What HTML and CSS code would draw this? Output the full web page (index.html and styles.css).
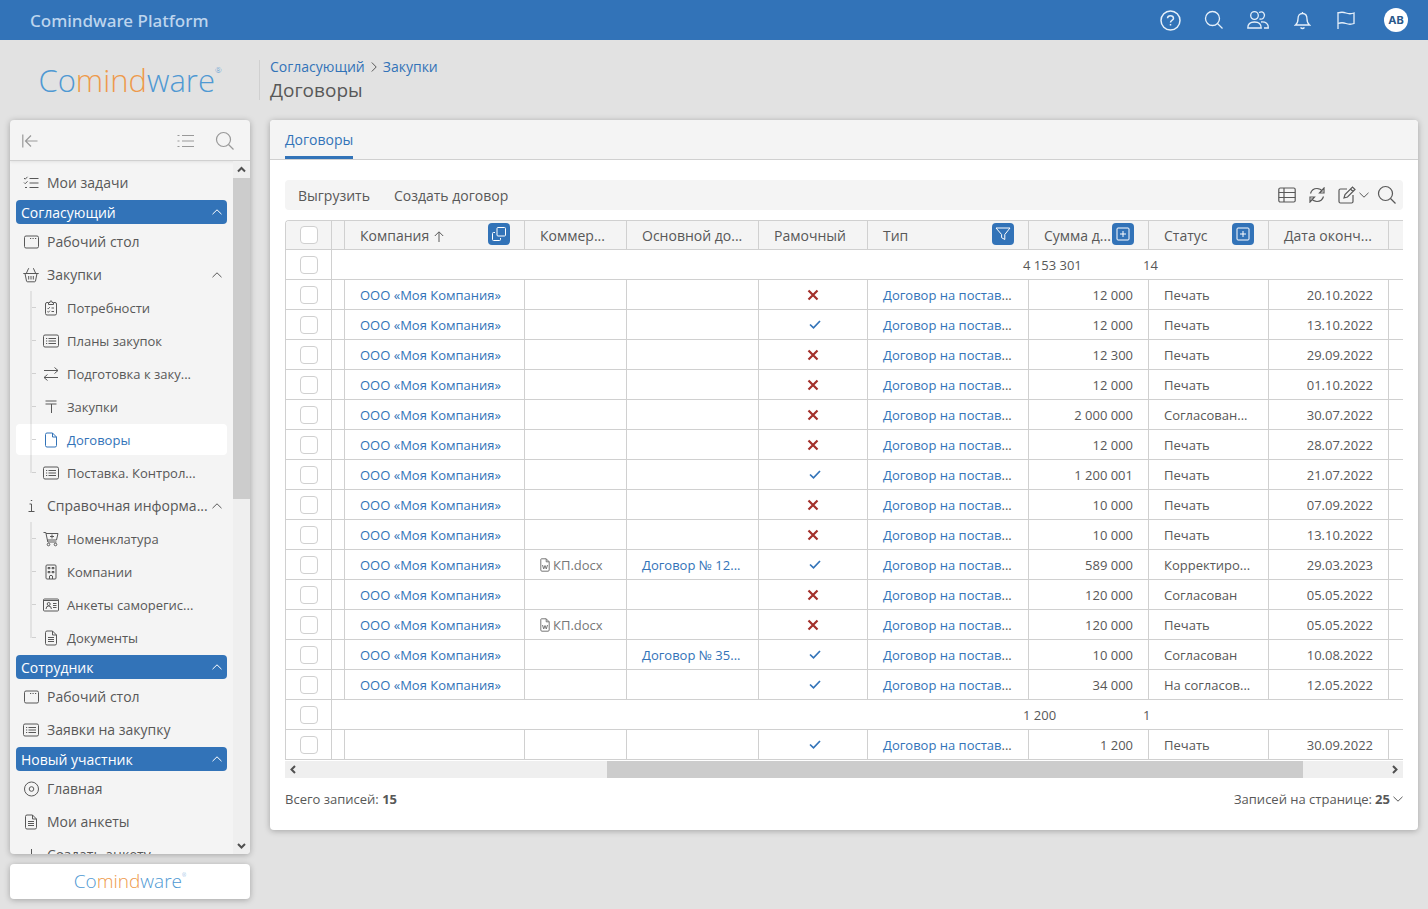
FILE: index.html
```html
<!DOCTYPE html>
<html lang="ru">
<head>
<meta charset="utf-8">
<meta name="viewport" content="width=device-width, initial-scale=1">
<title>Договоры</title>
<link rel="stylesheet" href="styles.css">
</head>
<body>
<svg class="sprite" aria-hidden="true">
  <symbol id="chev-up" viewBox="0 0 10 6"><path d="M.5 5.200 5 .8l4.500 4.400"/></symbol>
  <symbol id="chev-down" viewBox="0 0 10 6"><path d="M.5.8 5 5.200 9.500.8"/></symbol>
  <symbol id="search" viewBox="0 0 20 20"><circle cx="8.500" cy="8.500" r="7"/><path d="m13.500 13.500 5 5"/></symbol>
  <symbol id="desk" viewBox="0 0 16 16"><rect x="1.500" y="2" width="14" height="12" rx="1.500"/><path d="M7 4.500h1.200M9.500 4.500h1.200M12 4.500h1.200"/></symbol>
  <symbol id="list" viewBox="0 0 16 16"><rect x=".5" y="2" width="15" height="12" rx="1.500"/><path d="M3 5.500h1.200M5.500 5.500H13M3 8h1.200M5.500 8H13M3 10.500h1.200M5.500 10.500H13"/></symbol>
  <symbol id="doc" viewBox="0 0 16 16"><path d="M4 1h5.500l4 4v8.500q0 1.500-1.500 1.500H4q-1.500 0-1.500-1.500V2.500Q2.500 1 4 1M9.500 1v4h4"/></symbol>
  <symbol id="doc-text" viewBox="0 0 16 16"><path d="M4 1h5.500l4 4v8.500q0 1.500-1.500 1.500H4q-1.500 0-1.500-1.500V2.500Q2.500 1 4 1M9.500 1v4h4M5 7.500h6M5 9.500h6M5 11.500h6"/></symbol>
  <symbol id="docx" viewBox="0 0 10 14"><path d="M1.500.8h4.700l3 3v8.200q0 1.200-1.200 1.200H2Q.8 13.200.8 12V1.500q0-.7.7-.7M6.200.8v3h3M2.500 7l1.200 4L5 7.500 6.300 11l1.200-4"/></symbol>
  <symbol id="yes" viewBox="0 0 12 9"><path d="m1 4.500 3.500 3.300L11 1"/></symbol>
  <symbol id="no" viewBox="0 0 12 12"><path d="m1.500 1.500 9 9m0-9-9 9"/></symbol>
  <symbol id="plus-box" viewBox="0 0 14 14"><rect x="1" y="1" width="12" height="12" rx="1"/><path d="M7 4v6M4 7h6"/></symbol>
</svg>

<header class="topbar">
  <span class="brand">Comindware Platform</span>
  <nav class="top-actions">
    <button type="button" aria-label="Справка"><svg width="21" height="21" viewBox="0 0 21 21"><circle cx="10.500" cy="10.500" r="9.500" stroke-width="1.500"/><path d="M7.500 8.300Q7.700 5.800 10.500 5.800t3 2.500q0 1.300-1.500 2-1.500.8-1.500 2.200M10.500 14v1.500" stroke-width="1.500"/></svg></button>
    <button type="button" aria-label="Поиск"><svg width="20" height="20"><use href="#search"/></svg></button>
    <button type="button" aria-label="Пользователи"><svg width="22" height="18" viewBox="0 0 22 18"><circle cx="7.500" cy="4.500" r="3.800"/><path d="M.8 17q0-6 6.700-6t6.700 6zM12 1.500q4.500-2 5.500 2.500-.5 5-5 4M14 11q7.500-.5 7.300 6H17"/></svg></button>
    <button type="button" aria-label="Уведомления"><svg width="17" height="19" viewBox="0 0 17 19"><path d="M8.500 1v1.500M1.500 14Q4 12 4 8q0-5.500 4.500-5.500T13 8q0 4 2.500 6zM6.500 16.500q2 2 4 0"/></svg></button>
    <button type="button" aria-label="Задачи"><svg width="18" height="19" viewBox="0 0 18 19"><path d="M1 1v17M1 2q4-1.500 8 0t8 0v10.500q-4 1.500-8 0t-8 0"/></svg></button>
  </nav>
  <button type="button" class="avatar">AB</button>
</header>

<div class="page">
  <div class="logo logo-large"><span>Co</span><span class="logo-accent">mind</span><span>ware</span><sup>®</sup></div>

  <div class="heading">
    <nav class="crumbs"><a href="#">Согласующий</a><svg width="6" height="10" viewBox="0 0 6 10"><path d="m.8.5 4.400 4.500L.8 9.500"/></svg><a href="#">Закупки</a></nav>
    <h1>Договоры</h1>
  </div>

  <aside class="side">
    <div class="side-card">
      <div class="side-tools">
        <button type="button" aria-label="Свернуть"><svg width="16" height="14" viewBox="0 0 16 14"><path d="M.8.5v13M15.500 7h-12M9 1.500 3.500 7 9 12.500"/></svg></button>
        <button type="button" class="push" aria-label="Список"><svg width="17" height="14" viewBox="0 0 17 14"><path d="M.5 1.500h2M5 1.500h12M.5 7h2M5 7h12M.5 12.500h2M5 12.500h12"/></svg></button>
        <button type="button" aria-label="Поиск"><svg width="20" height="20"><use href="#search"/></svg></button>
      </div>
      <div class="side-scroll">
        <nav class="menu">
          <a class="item" href="#"><svg class="ico" viewBox="0 0 16 16"><path d="m1 3 1.200 1.200L4.500 1.800M1 7.500l1.200 1.200 2.300-2.400M6.500 3.500h9M6.500 8h9M6.500 12.500h9M2 12.500h2"/></svg><span>Мои задачи</span></a>
          <button type="button" class="section"><span>Согласующий</span><svg class="chev"><use href="#chev-up"/></svg></button>
          <a class="item" href="#"><svg class="ico"><use href="#desk"/></svg><span>Рабочий стол</span></a>
          <button type="button" class="item"><svg class="ico" viewBox="0 0 16 16"><path d="M.3 6.500h15.400M2 6.500l1.500 7.500q.2.800 1 .8h7q.8 0 1-.8L14 6.500M3.500 6l2-4.500M12.500 6l-2-4.500M5.500 1.500h.6M10 1.500h.6M5.700 9v3.500M8 9v3.500M10.300 9v3.500"/></svg><span>Закупки</span><svg class="chev"><use href="#chev-up"/></svg></button>
          <ul class="tree">
            <li><a class="item" href="#"><svg class="ico" viewBox="0 0 16 16"><path d="M5 2.500H4Q2.500 2.500 2.500 4v9.500Q2.500 15 4 15h8q1.500 0 1.500-1.500V4q0-1.500-1.500-1.500h-1M5.500 4.500h5v-2H9q0-1.800-1-1.800t-1 1.800H5.500zM4.500 8l.8.800 1.500-1.600M8.500 8H11M4.500 11.500l.8.800 1.500-1.600M8.500 11.500H11"/></svg><span>Потребности</span></a></li>
            <li><a class="item" href="#"><svg class="ico"><use href="#list"/></svg><span>Планы закупок</span></a></li>
            <li><a class="item" href="#"><svg class="ico" viewBox="0 0 16 16"><path d="M1 4.500h14M11.500 1.500l3.500 3-3.500 3M15 11.500H1M4.500 8.500l-3.500 3 3.500 3"/></svg><span>Подготовка к заку...</span></a></li>
            <li><a class="item" href="#"><svg class="ico" viewBox="0 0 16 16"><path d="M2.500 2h11M2.500 5h11M8.500 5v9"/></svg><span>Закупки</span></a></li>
            <li><a class="item active" href="#"><svg class="ico"><use href="#doc"/></svg><span>Договоры</span></a></li>
            <li><a class="item" href="#"><svg class="ico"><use href="#list"/></svg><span>Поставка. Контрол...</span></a></li>
          </ul>
          <button type="button" class="item"><svg class="ico" viewBox="0 0 16 16"><path d="M7.800 2.500h1.400M6.500 6h2v7.500M5.500 13.500h6"/></svg><span>Справочная информа...</span><svg class="chev"><use href="#chev-up"/></svg></button>
          <ul class="tree">
            <li><a class="item" href="#"><svg class="ico" viewBox="0 0 16 16"><path d="M.5 1.500h2.300l2 9.500h8.700M3 2.500h12L13.500 9H4.500M9 3.500v4M7 5.500h4"/><circle cx="5.500" cy="13.500" r="1.300"/><circle cx="12.500" cy="13.500" r="1.300"/></svg><span>Номенклатура</span></a></li>
            <li><a class="item" href="#"><svg class="ico" viewBox="0 0 16 16"><rect x="3" y="1" width="10" height="14" rx="1"/><path d="M5 3.500h2v1.200H5zM9 3.500h2v1.200H9zM5 7.500h2v1.200H5zM9 7.500h2v1.200H9zM6.500 15v-3q1.500-1.500 3 0v3"/></svg><span>Компании</span></a></li>
            <li><a class="item" href="#"><svg class="ico" viewBox="0 0 16 16"><rect x=".5" y="2" width="15" height="12" rx="1"/><path d="M.5 3.500h15M3 12q0-3 2.700-3t2.700 3M10 6.500h3.500M10 8.500h3.500M10 10.500h3.500"/><circle cx="5.700" cy="7" r="1.500"/></svg><span>Анкеты саморегис...</span></a></li>
            <li><a class="item" href="#"><svg class="ico"><use href="#doc-text"/></svg><span>Документы</span></a></li>
          </ul>
          <button type="button" class="section"><span>Сотрудник</span><svg class="chev"><use href="#chev-up"/></svg></button>
          <a class="item" href="#"><svg class="ico"><use href="#desk"/></svg><span>Рабочий стол</span></a>
          <a class="item" href="#"><svg class="ico"><use href="#list"/></svg><span>Заявки на закупку</span></a>
          <button type="button" class="section"><span>Новый участник</span><svg class="chev"><use href="#chev-up"/></svg></button>
          <a class="item" href="#"><svg class="ico" viewBox="0 0 16 16"><circle cx="8.500" cy="8" r="7"/><circle cx="8.500" cy="8" r="2.300"/></svg><span>Главная</span></a>
          <a class="item" href="#"><svg class="ico"><use href="#doc-text"/></svg><span>Мои анкеты</span></a>
          <a class="item" href="#"><svg class="ico" viewBox="0 0 16 16"><path d="M8.500 2v12M2.500 8h12"/></svg><span>Создать анкету</span></a>
        </nav>
        <div class="vbar">
          <svg width="17" height="17" viewBox="0 0 17 17"><path d="m5 10.500 3.500-3.500 3.500 3.500"/></svg>
          <div class="vthumb"></div>
          <svg width="17" height="17" viewBox="0 0 17 17"><path d="m5 7 3.500 3.500L12 7"/></svg>
        </div>
      </div>
    </div>
    <div class="side-foot"><div class="logo logo-small"><span>Co</span><span class="logo-accent">mind</span><span>ware</span><sup>®</sup></div></div>
  </aside>

  <main class="panel">
    <div class="tabs"><a class="tab" href="#">Договоры</a></div>
    <div class="content">
      <div class="toolbar">
        <button type="button" class="command">Выгрузить</button>
        <button type="button" class="command">Создать договор</button>
        <div class="tools">
          <button type="button" aria-label="Вид"><svg width="18" height="16" viewBox="0 0 18 16"><rect x=".8" y="1" width="16.400" height="14" rx="1.500"/><path d="M.8 5.500h16.400M.8 10.500h16.400M6 1v14"/></svg></button>
          <button type="button" aria-label="Обновить"><svg width="16" height="16" viewBox="0 0 16 16"><path d="M1.500 6.500Q3 1.500 8 1.500q3.500 0 5.500 3M15 1v5h-4.500zM14.500 9.500q-1.500 5-6.500 5-3.500 0-5.500-3M1 15v-5h4.500z"/></svg></button>
          <button type="button" class="edit" aria-label="Изменить"><svg width="18" height="18" viewBox="0 0 18 18"><path d="M9 3H2.500Q1 3 1 4.500v11Q1 17 2.500 17h11q1.500 0 1.500-1.500V9M6 12l1-3.500L14.500 1 17 3.500 9.500 11zM12.500 3 15 5.500"/></svg><svg class="chev"><use href="#chev-down"/></svg></button>
          <button type="button" aria-label="Поиск"><svg width="20" height="20"><use href="#search"/></svg></button>
        </div>
      </div>

      <div class="grid-wrap">
      <table class="grid">
        <colgroup><col class="w-check"><col class="w-gap"><col class="w-company"><col class="w-offer"><col class="w-parent"><col class="w-frame"><col class="w-type"><col class="w-std"><col class="w-std"><col class="w-std"><col></colgroup>
        <thead>
          <tr>
            <th><input type="checkbox" aria-label="Выбрать все"></th><th></th>
            <th><div class="th"><span>Компания</span><svg class="sort" width="10" height="11" viewBox="0 0 10 11"><path d="M5 11V1M.8 5 5 .8 9.200 5"/></svg><button type="button" aria-label="Группировка"><svg width="14" height="14" viewBox="0 0 14 14"><rect x="5" y=".5" width="8.500" height="8.500" rx="1"/><path d="M3 5.500H1.500q-1 0-1 1v6q0 1 1 1h6q1 0 1-1V11"/></svg></button></div></th>
            <th>Коммер...</th><th>Основной до...</th><th>Рамочный</th>
            <th><div class="th"><span>Тип</span><button type="button" aria-label="Фильтр"><svg width="16" height="14" viewBox="0 0 16 14"><path d="M1 1h14L9.800 7.500v5l-3.200-1.800V7.500z"/></svg></button></div></th>
            <th><div class="th"><span>Сумма д...</span><button type="button" aria-label="Итог"><svg width="14" height="14"><use href="#plus-box"/></svg></button></div></th>
            <th><div class="th"><span>Статус</span><button type="button" aria-label="Итог"><svg width="14" height="14"><use href="#plus-box"/></svg></button></div></th>
            <th>Дата оконч...</th><th></th>
          </tr>
        </thead>
        <tbody>
          <tr class="group"><td><input type="checkbox" aria-label="Выбрать группу"></td><td colspan="10"><div class="totals"><span>4 153 301</span><span>14</span></div></td></tr>
          <tr><td><input type="checkbox" aria-label="Выбрать"></td><td></td><td><a href="#">ООО «Моя Компания»</a></td><td></td><td></td><td class="flag"><svg class="no"><use href="#no"/></svg></td><td><a href="#">Договор на постав</a>...</td><td class="num">12 000</td><td>Печать</td><td class="num">20.10.2022</td><td></td></tr>
          <tr><td><input type="checkbox" aria-label="Выбрать"></td><td></td><td><a href="#">ООО «Моя Компания»</a></td><td></td><td></td><td class="flag"><svg class="yes"><use href="#yes"/></svg></td><td><a href="#">Договор на постав</a>...</td><td class="num">12 000</td><td>Печать</td><td class="num">13.10.2022</td><td></td></tr>
          <tr><td><input type="checkbox" aria-label="Выбрать"></td><td></td><td><a href="#">ООО «Моя Компания»</a></td><td></td><td></td><td class="flag"><svg class="no"><use href="#no"/></svg></td><td><a href="#">Договор на постав</a>...</td><td class="num">12 300</td><td>Печать</td><td class="num">29.09.2022</td><td></td></tr>
          <tr><td><input type="checkbox" aria-label="Выбрать"></td><td></td><td><a href="#">ООО «Моя Компания»</a></td><td></td><td></td><td class="flag"><svg class="no"><use href="#no"/></svg></td><td><a href="#">Договор на постав</a>...</td><td class="num">12 000</td><td>Печать</td><td class="num">01.10.2022</td><td></td></tr>
          <tr><td><input type="checkbox" aria-label="Выбрать"></td><td></td><td><a href="#">ООО «Моя Компания»</a></td><td></td><td></td><td class="flag"><svg class="no"><use href="#no"/></svg></td><td><a href="#">Договор на постав</a>...</td><td class="num">2 000 000</td><td>Согласован...</td><td class="num">30.07.2022</td><td></td></tr>
          <tr><td><input type="checkbox" aria-label="Выбрать"></td><td></td><td><a href="#">ООО «Моя Компания»</a></td><td></td><td></td><td class="flag"><svg class="no"><use href="#no"/></svg></td><td><a href="#">Договор на постав</a>...</td><td class="num">12 000</td><td>Печать</td><td class="num">28.07.2022</td><td></td></tr>
          <tr><td><input type="checkbox" aria-label="Выбрать"></td><td></td><td><a href="#">ООО «Моя Компания»</a></td><td></td><td></td><td class="flag"><svg class="yes"><use href="#yes"/></svg></td><td><a href="#">Договор на постав</a>...</td><td class="num">1 200 001</td><td>Печать</td><td class="num">21.07.2022</td><td></td></tr>
          <tr><td><input type="checkbox" aria-label="Выбрать"></td><td></td><td><a href="#">ООО «Моя Компания»</a></td><td></td><td></td><td class="flag"><svg class="no"><use href="#no"/></svg></td><td><a href="#">Договор на постав</a>...</td><td class="num">10 000</td><td>Печать</td><td class="num">07.09.2022</td><td></td></tr>
          <tr><td><input type="checkbox" aria-label="Выбрать"></td><td></td><td><a href="#">ООО «Моя Компания»</a></td><td></td><td></td><td class="flag"><svg class="no"><use href="#no"/></svg></td><td><a href="#">Договор на постав</a>...</td><td class="num">10 000</td><td>Печать</td><td class="num">13.10.2022</td><td></td></tr>
          <tr><td><input type="checkbox" aria-label="Выбрать"></td><td></td><td><a href="#">ООО «Моя Компания»</a></td><td><a class="file" href="#"><svg><use href="#docx"/></svg>КП.docx</a></td><td><a href="#">Договор № 12...</a></td><td class="flag"><svg class="yes"><use href="#yes"/></svg></td><td><a href="#">Договор на постав</a>...</td><td class="num">589 000</td><td>Корректиро...</td><td class="num">29.03.2023</td><td></td></tr>
          <tr><td><input type="checkbox" aria-label="Выбрать"></td><td></td><td><a href="#">ООО «Моя Компания»</a></td><td></td><td></td><td class="flag"><svg class="no"><use href="#no"/></svg></td><td><a href="#">Договор на постав</a>...</td><td class="num">120 000</td><td>Согласован</td><td class="num">05.05.2022</td><td></td></tr>
          <tr><td><input type="checkbox" aria-label="Выбрать"></td><td></td><td><a href="#">ООО «Моя Компания»</a></td><td><a class="file" href="#"><svg><use href="#docx"/></svg>КП.docx</a></td><td></td><td class="flag"><svg class="no"><use href="#no"/></svg></td><td><a href="#">Договор на постав</a>...</td><td class="num">120 000</td><td>Печать</td><td class="num">05.05.2022</td><td></td></tr>
          <tr><td><input type="checkbox" aria-label="Выбрать"></td><td></td><td><a href="#">ООО «Моя Компания»</a></td><td></td><td><a href="#">Договор № 35...</a></td><td class="flag"><svg class="yes"><use href="#yes"/></svg></td><td><a href="#">Договор на постав</a>...</td><td class="num">10 000</td><td>Согласован</td><td class="num">10.08.2022</td><td></td></tr>
          <tr><td><input type="checkbox" aria-label="Выбрать"></td><td></td><td><a href="#">ООО «Моя Компания»</a></td><td></td><td></td><td class="flag"><svg class="yes"><use href="#yes"/></svg></td><td><a href="#">Договор на постав</a>...</td><td class="num">34 000</td><td>На согласов...</td><td class="num">12.05.2022</td><td></td></tr>
          <tr class="group"><td><input type="checkbox" aria-label="Выбрать группу"></td><td colspan="10"><div class="totals"><span>1 200</span><span>1</span></div></td></tr>
          <tr><td><input type="checkbox" aria-label="Выбрать"></td><td></td><td></td><td></td><td></td><td class="flag"><svg class="yes"><use href="#yes"/></svg></td><td><a href="#">Договор на постав</a>...</td><td class="num">1 200</td><td>Печать</td><td class="num">30.09.2022</td><td></td></tr>
        </tbody>
      </table>
      </div>
      <div class="hbar">
        <svg width="17" height="17" viewBox="0 0 17 17"><path d="M10 5 6.500 8.500 10 12"/></svg>
        <div class="htrack"><div class="hthumb"></div></div>
        <svg width="17" height="17" viewBox="0 0 17 17"><path d="m7 5 3.500 3.500L7 12"/></svg>
      </div>
      <div class="foot">
        <span>Всего записей: <b>15</b></span>
        <div class="pager"><label for="page-size">Записей на странице:</label><select id="page-size"><option>25</option></select><svg class="chev"><use href="#chev-down"/></svg></div>
      </div>
    </div>
  </main>
</div>
</body>
</html>
```
FILE: styles.css
```css
* { box-sizing: border-box; }
body {
  margin: 0;
  height: 100vh;
  display: flex;
  flex-direction: column;
  background: #e2e2e2;
  color: #585858;
  font: 14px/20px "Open Sans", "Noto Sans", sans-serif;
}
a { color: #3273b8; text-decoration: none; }
button {
  margin: 0;
  padding: 0;
  border: 0;
  background: none;
  color: inherit;
  font: inherit;
  cursor: pointer;
}
svg { display: block; flex: none; fill: none; stroke: currentColor; }
.sprite { position: absolute; width: 0; height: 0; }
.chev { width: 10px; height: 6px; }

.topbar {
  flex: none;
  height: 40px;
  padding: 0 20px 0 30px;
  display: flex;
  align-items: center;
  background: #3273b8;
}
.brand { padding-top: 2px; color: #bdd5ee; font: 500 17px/20px "Noto Sans", sans-serif; }
.top-actions { margin-left: auto; margin-right: 16px; display: flex; }
.top-actions button {
  width: 44px;
  height: 40px;
  display: flex;
  align-items: center;
  justify-content: center;
  color: #e6f0fa;
}
.top-actions svg { stroke-width: 1.3; }
.avatar {
  width: 24px;
  height: 24px;
  border-radius: 50%;
  background: #fff;
  color: #29588a;
  font: 700 11px/24px Inter, sans-serif;
}

.page {
  flex: 1;
  min-height: 0;
  padding: 0 10px 10px;
  display: grid;
  grid-template: 80px minmax(0, 1fr) / 240px minmax(0, 1fr);
  column-gap: 20px;
}

.logo {
  display: flex;
  justify-content: center;
  align-items: center;
  color: #4f99d3;
  font-weight: 350;
}
.logo-accent { color: #ee9a4b; }
.logo sup { align-self: flex-start; line-height: 1; }
.logo-large { font-size: 31px; line-height: 40px; }
.logo-large sup { margin-top: 26px; font-size: 8px; }
.logo-small { font-size: 19px; line-height: 34px; }
.logo-small sup { margin-top: 9px; font-size: 5px; }

.heading {
  align-self: center;
  margin-left: -11px;
  padding: 0 0 2px 10px;
  height: 40px;
  display: flex;
  flex-direction: column;
  justify-content: center;
  border-left: 1px solid #d0d0d0;
}
.crumbs { display: flex; align-items: center; gap: 6px; line-height: 22px; }
h1 { margin: 0; font-size: 19px; line-height: 24px; font-weight: 400; }

.side { display: flex; flex-direction: column; gap: 10px; min-height: 0; }
.side-card, .side-foot, .panel { border-radius: 4px; box-shadow: 0 1px 6px rgba(0, 0, 0, .28); }
.side-card {
  flex: 1;
  min-height: 0;
  display: flex;
  flex-direction: column;
  overflow: hidden;
  background: #f4f4f4;
}
.side-tools {
  flex: none;
  height: 41px;
  padding: 1px 15px 0 12px;
  display: flex;
  align-items: center;
  gap: 21px;
  border-bottom: 1px solid #d0d0d0;
  box-shadow: 0 1px 3px rgba(0, 0, 0, .08);
  color: #999;
}
.side-tools .push { margin-left: auto; }
.side-tools svg { stroke-width: 1.2; }
.side-scroll { flex: 1; min-height: 0; display: flex; }
.menu {
  flex: 1;
  min-width: 0;
  padding: 5px 6px 0;
  overflow: hidden;
}
.section, .item { width: 100%; display: flex; align-items: center; text-align: left; }
.section span, .item span { flex: 1; min-width: 0; white-space: nowrap; }
.section {
  height: 24px;
  margin: 1px 0;
  padding: 0 5px;
  border-radius: 4px;
  background: #3273b8;
  color: #fff;
}
.section span { padding-top: 2px; }
.item { height: 33px; padding: 0 5px 0 7px; gap: 8px; color: #585858; }
.item .chev { margin-left: -8px; }
.ico { width: 16px; height: 16px; }
.tree { margin: 0; padding: 0; list-style: none; font-size: 13px; }
.tree li { position: relative; padding: 1px 0; }
.tree .item { height: 31px; padding-left: 27px; border-radius: 4px; }
.tree .active { background: #fff; color: #3273b8; }
.tree li::before, .tree li::after { content: ""; position: absolute; background: rgba(0, 0, 0, .07); }
.tree li::before { left: 14px; top: 0; width: 2px; height: 100%; }
.tree li:last-child::before { height: 50%; }
.tree li::after { left: 16px; top: 16px; width: 4px; height: 1px; background: #d0d0d0; }

.vbar {
  flex: none;
  width: 17px;
  display: flex;
  flex-direction: column;
  justify-content: space-between;
  background: #efefef;
}
.vbar svg, .hbar svg { stroke: #505050; stroke-width: 2; }
.vthumb { height: 46.3%; margin-bottom: auto; background: #ccc; }
.side-foot { flex: none; height: 35px; background: #fff; }

.panel { align-self: start; overflow: hidden; background: #fff; }
.tabs { height: 40px; padding: 0 15px; display: flex; background: #f4f4f4; border-bottom: 1px solid #d0d0d0; }
.tab { border-bottom: 3px solid #3273b8; line-height: 40px; height: 39px; }
.content { padding: 20px 15px; }
.toolbar {
  height: 30px;
  margin-bottom: 10px;
  padding: 0 6px 0 13px;
  display: flex;
  align-items: center;
  gap: 24px;
  border-radius: 4px;
  background: #f4f4f4;
}
.command { padding-top: 2px; }
.tools { margin-left: auto; display: flex; align-items: center; gap: 13px; }
.tools svg { stroke-width: 1.2; }
.tools .chev { stroke-width: 1; }
.edit { display: flex; align-items: center; gap: 3px; }
.edit + button { margin-left: -5px; }

.grid-wrap { overflow: hidden; border-left: 1px solid #d0d0d0; border-top: 1px solid #d0d0d0; border-radius: 4px 0 0 0; }
.grid { width: 100%; table-layout: fixed; border-collapse: separate; border-spacing: 0; }
.w-check { width: 46px; }
.w-gap { width: 13px; }
.w-company { width: 180px; }
.w-offer { width: 102px; }
.w-parent { width: 132px; }
.w-frame { width: 109px; }
.w-type { width: 161px; }
.w-std { width: 120px; }
.grid th, .grid td {
  height: 30px;
  padding: 0 0 0 15px;
  border: solid #d0d0d0;
  border-width: 0 1px 1px 0;
  font-size: 13px;
  font-weight: 400;
  text-align: left;
  vertical-align: middle;
  white-space: nowrap;
}
.grid th { height: 29px; padding-top: 2px; background: #f4f4f4; font-size: 14px; }
.grid th:first-child { padding: 0 0 0 14px; }
.grid td:first-child { padding-left: 14px; }
.grid th:last-child, .grid td:last-child { border-right: 0; padding: 0; }
.grid th:nth-child(2), .grid td:nth-child(2) { padding: 0; }
.grid .num { padding: 0 15px 0 0; text-align: right; }
.grid .flag { padding: 0; }
.flag svg { margin: 0 auto; }
.flag .yes { width: 12px; height: 9px; margin-left: 50px; color: #3273b8; stroke-width: 1.7; }
.no { width: 12px; height: 12px; color: #a3302b; stroke-width: 2.2; }
.th { display: flex; align-items: center; }
.th button {
  width: 22px;
  height: 22px;
  margin: 0 14px 4px auto;
  display: flex;
  align-items: center;
  justify-content: center;
  border-radius: 4px;
  background: #3273b8;
  color: #fff;
}
.sort { margin-left: 5px; }
.file { display: flex; align-items: center; gap: 3px; color: #777; }
.file svg { width: 10px; height: 14px; }
.totals { display: flex; padding-left: 691px; }
.totals span { width: 120px; }
input[type="checkbox"] {
  appearance: none;
  display: block;
  width: 18px;
  height: 18px;
  margin: 0;
  border: 1px solid #d0d0d0;
  border-radius: 4px;
  background: #fff;
}

.hbar { height: 17px; margin-top: 1px; display: flex; background: #efefef; }
.htrack { flex: 1; }
.hthumb { width: 64.2%; height: 100%; margin-left: 28.1%; background: #ccc; }
.foot {
  margin-top: 10px;
  display: flex;
  justify-content: space-between;
  font-size: 13px;
  line-height: 22px;
  font-weight: 500;
}
.pager { display: flex; align-items: center; gap: 3px; }
select {
  appearance: none;
  padding: 0;
  border: 0;
  background: none;
  color: inherit;
  font: inherit;
  font-weight: 700;
}
```
